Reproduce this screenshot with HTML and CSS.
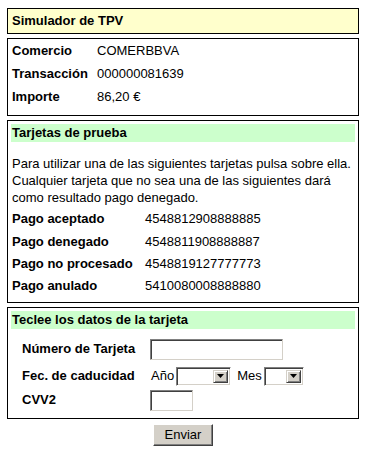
FILE: index.html
```html
<!DOCTYPE html>
<html lang="es">
<head>
    <meta charset="UTF-8">
    <meta name="viewport" content="width=device-width, initial-scale=1.0">
    <title>Simulador de TPV</title>
    <link rel="stylesheet" href="styles.css">
</head>
<body>

    <div class="panel panel-title">Simulador de TPV</div>

    <div class="panel panel-info">
        <div class="info-grid">
            <span class="label">Comercio</span><span>COMERBBVA</span>
            <span class="label">Transacción</span><span>000000081639</span>
            <span class="label">Importe</span><span>86,20 &euro;</span>
        </div>
    </div>

    <div class="panel">
        <div class="section-head">Tarjetas de prueba</div>
        <p class="help">Para utilizar una de las siguientes tarjetas pulsa sobre ella. Cualquier tarjeta que no sea una de las siguientes dará como resultado pago denegado.</p>
        <div class="cards-grid">
            <span class="label">Pago aceptado</span><a class="card-number">4548812908888885</a>
            <span class="label">Pago denegado</span><a class="card-number">4548811908888887</a>
            <span class="label">Pago no procesado</span><a class="card-number">4548819127777773</a>
            <span class="label">Pago anulado</span><a class="card-number">5410080008888880</a>
        </div>
    </div>

    <form class="panel card-form">
        <div class="section-head">Teclee los datos de la tarjeta</div>
        <div class="form-grid">
            <label class="label" for="pan">Número de Tarjeta</label>
            <div class="form-field"><input type="text" id="pan" class="text-input pan-input"></div>

            <label class="label date-row">Fec. de caducidad</label>
            <div class="form-field date-row">
                <span class="field-text">Año</span>
                <span class="combo combo-year">
                    <select></select>
                    <span class="combo-button"><svg width="7" height="4" viewBox="0 0 7 4"><path d="M0 0h7L3.5 4z" fill="#000"/></svg></span>
                </span>
                <span class="field-text">Mes</span>
                <span class="combo combo-month">
                    <select></select>
                    <span class="combo-button"><svg width="7" height="4" viewBox="0 0 7 4"><path d="M0 0h7L3.5 4z" fill="#000"/></svg></span>
                </span>
            </div>

            <label class="label" for="cvv">CVV2</label>
            <div class="form-field"><input type="text" id="cvv" class="text-input cvv-input"></div>
        </div>
    </form>

    <div class="actions">
        <button type="submit" class="btn">Enviar</button>
    </div>

</body>
</html>
```

FILE: styles.css
```css
/* common */
body {
    margin: 8px 7px;
    font-family: "Liberation Sans", Arial, sans-serif;
    font-size: 13px;
    line-height: 16px;
    color: #000;
    background: #fff;
}

.panel {
    border: 1px solid #000;
    padding: 3px;
    margin: 0 0 4px 0;
}

.label {
    font-weight: bold;
}

/* title */
.panel-title {
    background: #ffffcc;
    padding: 4px 4px 4px;
    font-weight: bold;
}

/* info */
.panel-info {
    padding-top: 0;
}

.info-grid {
    display: grid;
    grid-template-columns: 85px 1fr;
    grid-auto-rows: 23px;
    align-items: center;
    padding: 0 1px 4px;
}

/* cards */
.section-head {
    background: #ccffcc;
    font-weight: bold;
    padding: 1px 1px;
}

.help {
    margin: 13px 1px 2px;
    line-height: 17px;
}

.cards-grid {
    display: grid;
    grid-template-columns: 133px 1fr;
    grid-auto-rows: 22.4px;
    align-items: center;
    padding: 0 1px 1px;
}

.card-number {
    cursor: pointer;
}

/* form */
.card-form {
    padding-bottom: 7px;
}

.form-grid {
    display: grid;
    grid-template-columns: 128px 1fr;
    align-items: center;
    padding: 10px 0 0 11px;
}

.date-row {
    margin: 7px 0 4px;
}

.form-field {
    display: flex;
    align-items: center;
}

.field-text {
    margin: 0 2px 0 1px;
}

.combo + .field-text {
    margin-left: 6px;
}

.text-input {
    box-sizing: border-box;
    height: 21px;
    margin: 0;
    padding: 1px 2px;
    border: 1px solid;
    border-color: #808080 #d4d0c8 #d4d0c8 #808080;
    box-shadow: inset 1px 1px 0 #404040;
    background: #fff;
    font: inherit;
    outline: none;
}

.pan-input {
    width: 133px;
}

.cvv-input {
    width: 43px;
}

.combo {
    box-sizing: border-box;
    display: inline-flex;
    height: 19px;
    border: 1px solid;
    border-color: #808080 #fff #fff #808080;
    box-shadow: inset 1px 1px 0 #404040, inset -1px -1px 0 #d4d0c8;
    background: #fff;
    padding: 2px;
}

.combo select {
    appearance: none;
    -webkit-appearance: none;
    flex: 1;
    min-width: 0;
    border: 0;
    margin: 0;
    padding: 0;
    background: transparent;
    font: inherit;
}

.combo-year {
    width: 55px;
}

.combo-month {
    width: 40px;
}

.combo-button {
    box-sizing: border-box;
    display: flex;
    align-items: center;
    justify-content: center;
    width: 15px;
    background: #d4d0c8;
    border: 1px solid;
    border-color: #d4d0c8 #404040 #404040 #d4d0c8;
    box-shadow: inset 1px 1px 0 #fff, inset -1px -1px 0 #808080;
}

/* submit */
.actions {
    display: flex;
    justify-content: center;
    padding-top: 1px;
}

.btn {
    box-sizing: border-box;
    width: 60px;
    height: 22px;
    margin: 0;
    padding: 0;
    background: #d4d0c8;
    border: 1px solid;
    border-color: #fff #404040 #404040 #fff;
    box-shadow: inset -1px -1px 0 #808080;
    font: inherit;
    color: #000;
}
```
